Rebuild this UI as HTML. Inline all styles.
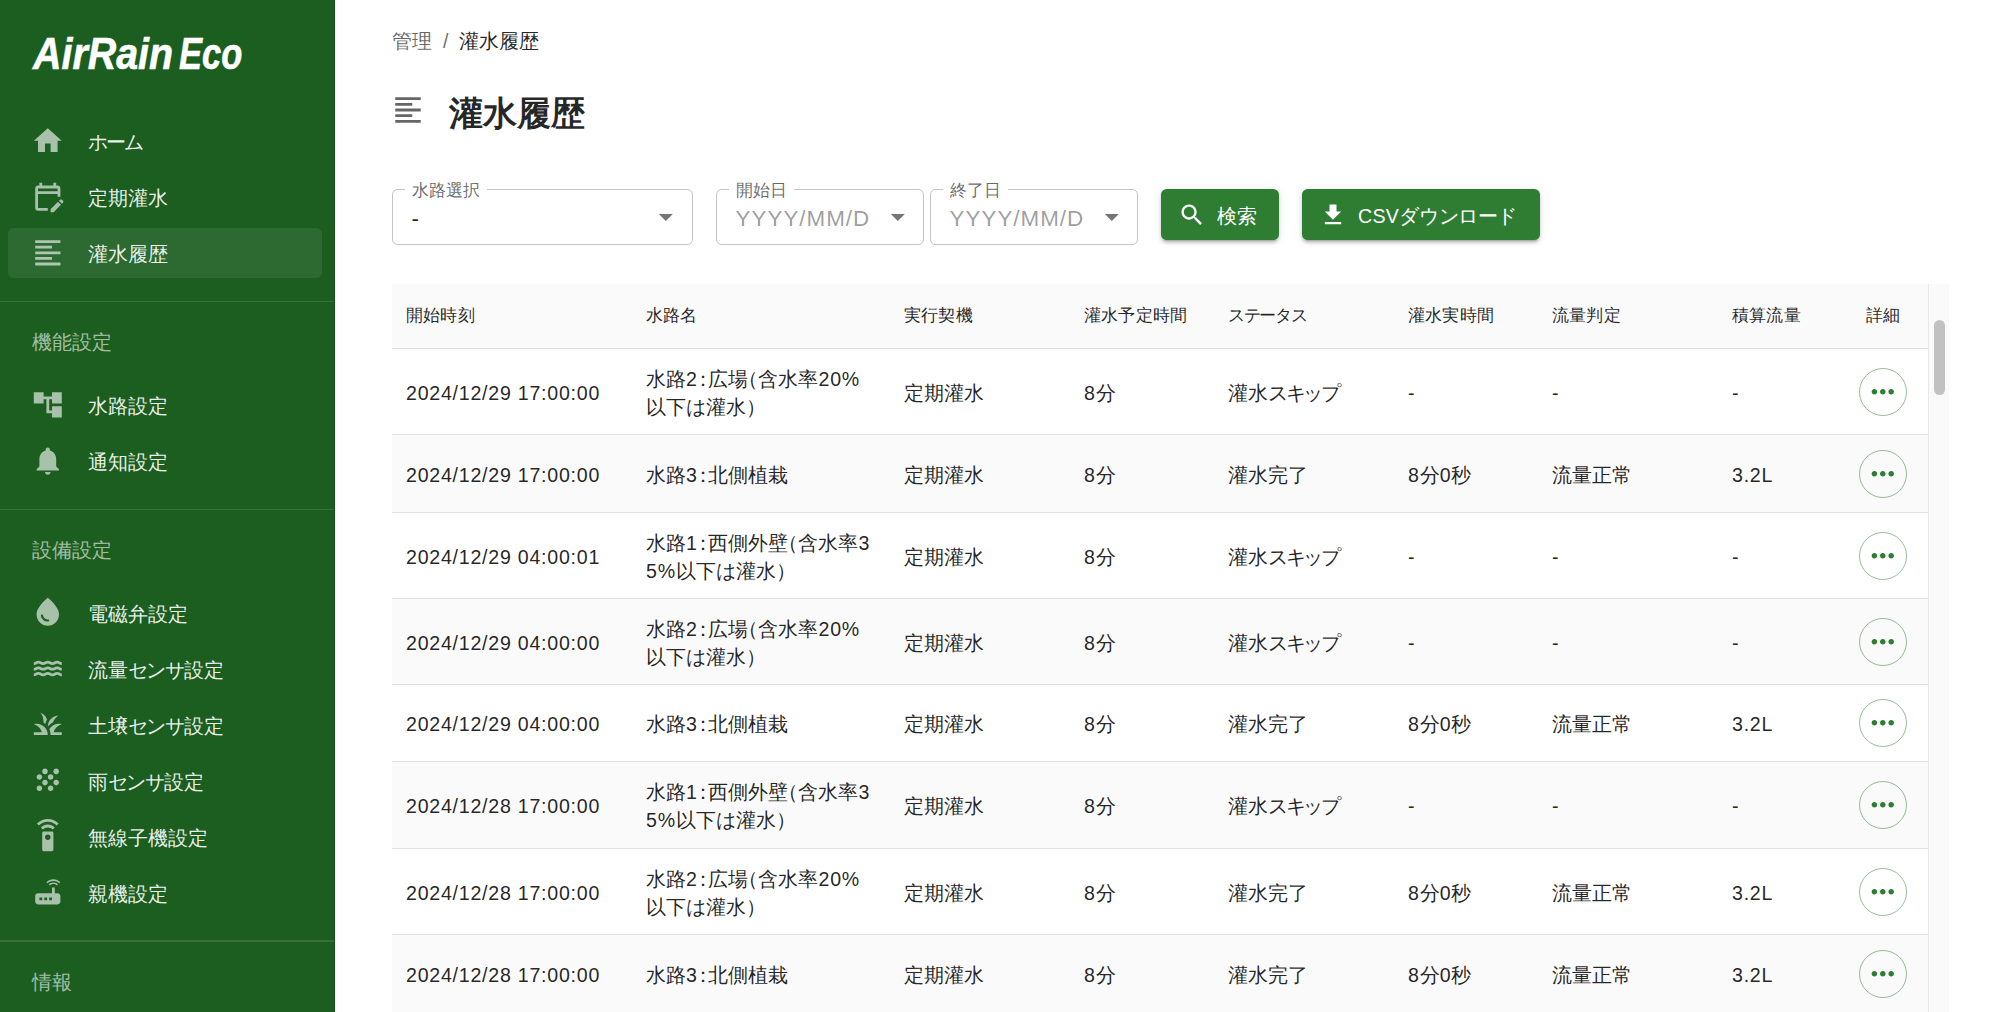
<!DOCTYPE html>
<html lang="ja">
<head>
<meta charset="utf-8">
<title>灌水履歴</title>
<style>
*{box-sizing:border-box;margin:0;padding:0}
html,body{width:2000px;height:1012px;overflow:hidden;background:#fff}
body{font-family:"Liberation Sans",sans-serif;color:rgba(0,0,0,.87);position:relative;font-size:19.6px}
.abs{position:absolute}
/* sidebar */
#side{position:absolute;left:0;top:0;width:335.4px;height:1012px;background:#1b5e20;border-right:1.4px solid rgba(0,0,0,.18);overflow:hidden}
#logo{position:absolute;left:0;top:0;font-weight:700;font-style:italic;font-size:45px;line-height:50px;color:#fff;white-space:nowrap}
#logo span{position:absolute;top:29px;transform-origin:0 0;-webkit-text-stroke:.6px #fff}
.nav{position:absolute;left:8px;width:313.5px;height:50.4px;border-radius:5.6px;color:rgba(255,255,255,.92);font-size:19.6px;line-height:52px;padding-left:79.6px;white-space:nowrap}
.nav.sel{background:rgba(255,255,255,.08)}
.nav svg{position:absolute;left:22.5px;top:7.9px;width:33.6px;height:33.6px;fill:rgba(255,255,255,.62)}
.sec{position:absolute;left:32px;color:rgba(255,255,255,.6);font-size:19.6px;line-height:28px;white-space:nowrap}
.div{position:absolute;left:0;width:336px;height:1.4px;background:rgba(255,255,255,.12)}
/* main */
#crumb{position:absolute;left:392px;top:27px;font-size:19.6px;line-height:28px;white-space:nowrap;color:rgba(0,0,0,.87)}
#crumb .g{color:rgba(0,0,0,.6)}
#crumb .s{color:rgba(0,0,0,.6);margin:0 11px}
#title{position:absolute;left:448.5px;top:90.8px;font-size:33.6px;font-weight:700;line-height:46px;white-space:nowrap;color:rgba(0,0,0,.87)}
#ticon{position:absolute;left:391px;top:93px;width:34px;height:34px;fill:rgba(0,0,0,.6)}
.fld{position:absolute;top:189.2px;height:56px;border:1.4px solid rgba(0,0,0,.23);border-radius:5.6px}
.fld .lb{position:absolute;left:12px;top:-11.5px;background:#fff;padding:0 7px;font-size:16.8px;line-height:24px;color:rgba(0,0,0,.6);white-space:nowrap}
.fld .val{position:absolute;left:18.6px;top:15px;font-size:22.4px;line-height:28px;white-space:nowrap}
.fld .ph{letter-spacing:1px}
.fld .ph{color:rgba(0,0,0,.4)}
.fld svg{position:absolute;top:10px;width:33.6px;height:33.6px;fill:rgba(0,0,0,.54)}
.btn{position:absolute;top:189px;height:51px;border-radius:5.6px;background:#2e7d32;color:#fff;font-size:19.6px;line-height:51px;white-space:nowrap;box-shadow:0 4px 2px -3px rgba(0,0,0,.2),0 3px 3px 0 rgba(0,0,0,.14),0 1.4px 7px 0 rgba(0,0,0,.12);}
.btn .t{position:absolute;left:56px;top:1.7px}
.btn svg{position:absolute;top:11.5px;width:28px;height:28px;fill:#fff}
/* table */
#tbl{position:absolute;left:392px;top:284px;width:1536px;height:728px;overflow:hidden}
.hd{position:absolute;left:0;top:0;width:1536px;height:65px;background:#fafafa;border-bottom:1.4px solid #e0e0e0;font-size:16.8px}
.hd>span{position:absolute;top:20.2px;line-height:24px;white-space:nowrap;color:rgba(0,0,0,.87);letter-spacing:.2px}
.row{position:absolute;left:0;width:1536px;border-bottom:1.4px solid #e0e0e0;font-size:19.6px}
.row.z{background:#fafafa}
.row>span{position:absolute;line-height:28px;white-space:nowrap}
.l{letter-spacing:.75px}
.pc{margin:0 -4.9px}.po{margin-left:-9.4px}.pe{margin-right:-9.4px}
.k{letter-spacing:-2.5px}
.hd .k{letter-spacing:-1.3px}
.btn .k{letter-spacing:-.35px}
.btn .l{letter-spacing:.3px}
.more{position:absolute;left:1467px;width:48px;height:48px;border-radius:50%;border:1.4px solid rgba(46,125,50,.5)}
.more svg{position:absolute;left:5.8px;top:5.8px;width:33.6px;height:33.6px;fill:#2e7d32}
#sb{position:absolute;left:1928px;top:284px;width:20.5px;height:728px;background:#fafafa;border-left:1.4px solid #e8e8e8}
#sb i{position:absolute;left:4.5px;top:36px;width:11.5px;height:75px;border-radius:6px;background:#c1c1c1}
</style>
</head>
<body>
<div id="side">
<div id="logo"><span style="left:33px;transform:scaleX(.875)">AirRain</span> <span style="left:178.5px;transform:scaleX(.766)">Eco</span></div>
<div class="nav" style="top:115.8px"><svg viewBox="0 0 24 24"><path d="M10 20v-6h4v6h5v-8h3L12 3 2 12h3v8z"/></svg><span class="k" style="letter-spacing:-1.8px">ホーム</span></div>
<div class="nav" style="top:171.8px"><svg viewBox="0 0 24 24"><path d="M5 10h14v2h2V6c0-1.1-.9-2-2-2h-1V2h-2v2H8V2H6v2H5c-1.11 0-1.99.9-1.99 2L3 20c0 1.1.89 2 2 2h7v-2H5V10zm0-4h14v2H5V6zm17.84 10.28-.71.71-2.12-2.12.71-.71c.39-.39 1.02-.39 1.41 0l.71.71c.39.39.39 1.02 0 1.41zm-3.54-.7 2.12 2.12-5.3 5.3H14v-2.12l5.3-5.3z"/></svg>定期灌水</div>
<div class="nav sel" style="top:227.8px"><svg viewBox="0 0 24 24"><path d="M15 15H3v2h12v-2zm0-8H3v2h12V7zM3 13h18v-2H3v2zm0 8h18v-2H3v2zM3 3v2h18V3H3z"/></svg>灌水履歴</div>
<div class="div" style="top:300.8px"></div>
<div class="sec" style="top:328.0px">機能設定</div>
<div class="nav" style="top:379.8px"><svg viewBox="0 0 24 24"><path d="M22 11V3h-7v3H9V3H2v8h7V8h2v10h4v3h7v-8h-7v3h-2V8h2v3z"/></svg>水路設定</div>
<div class="nav" style="top:435.8px"><svg viewBox="0 0 24 24"><path d="M12 22c1.1 0 2-.9 2-2h-4c0 1.1.89 2 2 2zm6-6v-5c0-3.07-1.64-5.64-4.5-6.32V4c0-.83-.67-1.5-1.5-1.5s-1.5.67-1.5 1.5v.68C7.63 5.36 6 7.92 6 11v5l-2 2v1h16v-1l-2-2z"/></svg>通知設定</div>
<div class="div" style="top:508.6px"></div>
<div class="sec" style="top:535.8px">設備設定</div>
<div class="nav" style="top:587.6px"><svg viewBox="0 0 24 24"><path d="M12 2c-5.33 4.55-8 8.48-8 11.8 0 4.98 3.8 8.2 8 8.2s8-3.22 8-8.2c0-3.32-2.67-7.25-8-11.8zM7.83 14c.37 0 .67.26.74.62.41 2.22 2.28 2.98 3.64 2.87.43-.02.79.32.79.75 0 .4-.32.73-.72.75-2.13.13-4.62-1.09-5.19-4.12-.08-.45.28-.87.74-.87z"/></svg>電磁弁設定</div>
<div class="nav" style="top:643.6px"><svg viewBox="0 0 24 24"><path d="M5.35 13c1.19 0 1.42 1 3.33 1 1.95 0 2.09-1 3.33-1 1.19 0 1.42 1 3.33 1 1.95 0 2.09-1 3.33-1 1.19 0 1.4.98 3.31 1v-2c-1.19 0-1.42-1-3.33-1-1.95 0-2.09 1-3.33 1-1.19 0-1.42-1-3.33-1-1.95 0-2.09 1-3.33 1-1.19 0-1.42-1-3.33-1-1.95 0-2.09 1-3.33 1v2c1.9 0 2.17-1 3.35-1zm13.32 2c-1.95 0-2.09 1-3.33 1-1.19 0-1.42-1-3.33-1-1.95 0-2.1 1-3.34 1-1.24 0-1.38-1-3.33-1-1.95 0-2.1 1-3.34 1v2c1.95 0 2.11-1 3.34-1 1.24 0 1.38 1 3.33 1 1.95 0 2.1-1 3.34-1 1.19 0 1.42 1 3.33 1 1.94 0 2.09-1 3.33-1 1.19 0 1.42 1 3.33 1v-2c-1.24 0-1.38-1-3.33-1zM5.35 9c1.19 0 1.42 1 3.33 1 1.95 0 2.09-1 3.33-1 1.19 0 1.42 1 3.33 1 1.95 0 2.09-1 3.33-1 1.19 0 1.4.98 3.31 1V8c-1.19 0-1.42-1-3.33-1-1.95 0-2.09 1-3.33 1-1.19 0-1.42-1-3.33-1-1.95 0-2.09 1-3.33 1-1.19 0-1.42-1-3.33-1C3.38 7 3.24 8 2 8v2c1.9 0 2.17-1 3.35-1z"/></svg>流量<span class="k" style="letter-spacing:-1.2px">センサ</span>設定</div>
<div class="nav" style="top:699.6px"><svg viewBox="0 0 24 24"><path d="M12 20H2v-2h5.750C7.020 15.190 4.810 12.990 2 12.260 2.640 12.100 3.310 12 4 12c4.420 0 8 3.580 8 8zM22 12.260c-.640-.160-1.310-.260-2-.260-2.930 0-5.480 1.580-6.880 3.930.290.660.530 1.350.670 2.070.130.650.200 1.320.200 2h8v-2h-5.750c.740-2.810 2.950-5.010 5.760-5.740zM15.640 11.020c.780-2.090 2.230-3.840 4.090-5C15.440 6.160 12 9.670 12 14v.020c.950-1.270 2.200-2.300 3.640-3zM11.420 8.850C10.580 6.660 8.880 4.890 6.700 4 8.140 5.860 9 8.180 9 10.710c0 .210-.030.410-.040.610.430.240.830.520 1.220.820.210-1.180.650-2.290 1.240-3.290z"/></svg>土壌<span class="k" style="letter-spacing:-1.2px">センサ</span>設定</div>
<div class="nav" style="top:755.6px"><svg viewBox="0 0 24 24"><path d="M10 12c-1.1 0-2 .9-2 2s.9 2 2 2 2-.9 2-2-.9-2-2-2zM6 8c-1.1 0-2 .9-2 2s.9 2 2 2 2-.9 2-2-.9-2-2-2zm0 8c-1.1 0-2 .9-2 2s.9 2 2 2 2-.9 2-2-.9-2-2-2zm12-8c1.1 0 2-.9 2-2s-.9-2-2-2-2 .9-2 2 .9 2 2 2zm-4 8c-1.1 0-2 .9-2 2s.9 2 2 2 2-.9 2-2-.9-2-2-2zm4-4c-1.1 0-2 .9-2 2s.9 2 2 2 2-.9 2-2-.9-2-2-2zm-4-4c-1.1 0-2 .9-2 2s.9 2 2 2 2-.9 2-2-.9-2-2-2zm-4-4c-1.1 0-2 .9-2 2s.9 2 2 2 2-.9 2-2-.9-2-2-2z"/></svg>雨<span class="k" style="letter-spacing:-1.2px">センサ</span>設定</div>
<div class="nav" style="top:811.6px"><svg viewBox="0 0 24 24"><path d="M15 9H9c-.55 0-1 .45-1 1v12c0 .55.45 1 1 1h6c.55 0 1-.45 1-1V10c0-.55-.45-1-1-1zm-3 6c-1.1 0-2-.9-2-2s.9-2 2-2 2 .9 2 2-.9 2-2 2zM7.05 6.050l1.410 1.410C9.370 6.560 10.620 6 12 6s2.630.56 3.540 1.460l1.410-1.410C15.680 4.780 13.930 4 12 4s-3.680.78-4.950 2.050zM12 0C8.960 0 6.210 1.230 4.220 3.220l1.410 1.410C7.260 3.010 9.510 2 12 2s4.740 1.010 6.360 2.640l1.410-1.410C17.790 1.230 15.040 0 12 0z"/></svg>無線子機設定</div>
<div class="nav" style="top:867.6px"><svg viewBox="0 0 24 24"><path d="M20.200 5.900l.8-.8C19.600 3.700 17.800 3 16 3s-3.600.7-5 2.100l.8.8C13 4.800 14.500 4.200 16 4.200s3 .6 4.200 1.700zm-.9.8c-.9-.9-2.100-1.400-3.300-1.400s-2.400.5-3.300 1.400l.8.8c.7-.7 1.600-1 2.500-1 .9 0 1.800.3 2.500 1l.8-.8zM19 13h-2V9h-2v4H5c-1.100 0-2 .9-2 2v4c0 1.100.9 2 2 2h14c1.100 0 2-.9 2-2v-4c0-1.100-.9-2-2-2zM8 18H6v-2h2v2zm3.500 0h-2v-2h2v2zm3.500 0h-2v-2h2v2z"/></svg>親機設定</div>
<div class="div" style="top:940.4px"></div>
<div class="sec" style="top:967.6px">情報</div>
</div>
<div id="main">
<div id="crumb"><span class="g">管理</span><span class="s">/</span><span>灌水履歴</span></div>
<svg id="ticon" viewBox="0 0 24 24"><path d="M15 15H3v2h12v-2zm0-8H3v2h12V7zM3 13h18v-2H3v2zm0 8h18v-2H3v2zM3 3v2h18V3H3z"/></svg>
<div id="title">灌水履歴</div>
<div class="fld" style="left:392px;width:300.5px"><span class="lb">水路選択</span><span class="val">-</span><svg viewBox="0 0 24 24" style="left:256px"><path d="M7 10l5 5 5-5z"/></svg></div>
<div class="fld" style="left:716px;width:207.5px"><span class="lb">開始日</span><span class="val ph">YYYY/MM/D</span><svg viewBox="0 0 24 24" style="left:164px"><path d="M7 10l5 5 5-5z"/></svg></div>
<div class="fld" style="left:930px;width:207.5px"><span class="lb">終了日</span><span class="val ph">YYYY/MM/D</span><svg viewBox="0 0 24 24" style="left:164px"><path d="M7 10l5 5 5-5z"/></svg></div>
<div class="btn" style="left:1161px;width:118px"><svg viewBox="0 0 24 24" style="left:16.5px"><path d="M15.5 14h-.79l-.28-.27C15.41 12.59 16 11.11 16 9.5 16 5.91 13.09 3 9.5 3S3 5.91 3 9.5 5.91 16 9.5 16c1.61 0 3.09-.59 4.23-1.57l.27.28v.79l5 4.99L20.49 19l-4.99-5zm-6 0C7.01 14 5 11.99 5 9.5S7.01 5 9.5 5 14 7.01 14 9.5 11.990 14 9.5 14z"/></svg><span class="t">検索</span></div>
<div class="btn" style="left:1302px;width:238px"><svg viewBox="0 0 24 24" style="left:16.5px"><path d="M5 20h14v-2H5v2zM19 9h-4V3H9v6H5l7 7 7-7z"/></svg><span class="t"><span class="l">CSV</span><span class="k">ダウンロード</span></span></div>
<div id="tbl"><div class="hd"><span style="left:14px">開始時刻</span><span style="left:254px">水路名</span><span style="left:512px">実行契機</span><span style="left:692px">灌水予定時間</span><span style="left:836px"><span class="k">ステータス</span></span><span style="left:1016px">灌水実時間</span><span style="left:1160px">流量判定</span><span style="left:1340px">積算流量</span><span style="left:1474px">詳細</span></div>
<div class="row" style="top:65px;height:86px"><span style="left:14px;top:29.9px"><span class="l">2024/12/29 17:00:00</span></span><span style="left:254px;top:15.9px">水路<span class="l">2</span><span class="pc">：</span>広場<span class="po">（</span>含水率<span class="l">20%</span><br>以下は灌水<span class="pe">）</span></span><span style="left:512px;top:29.9px">定期灌水</span><span style="left:692px;top:29.9px"><span class="l">8</span>分</span><span style="left:836px;top:29.9px">灌水<span class="k">スキップ</span></span><span style="left:1016px;top:29.9px"><span class="l">-</span></span><span style="left:1160px;top:29.9px"><span class="l">-</span></span><span style="left:1340px;top:29.9px"><span class="l">-</span></span><div class="more" style="top:18.9px"><svg viewBox="0 0 24 24"><path d="M6 10c-1.1 0-2 .9-2 2s.9 2 2 2 2-.9 2-2-.9-2-2-2zm12 0c-1.1 0-2 .9-2 2s.9 2 2 2 2-.9 2-2-.9-2-2-2zm-6 0c-1.1 0-2 .9-2 2s.9 2 2 2 2-.9 2-2-.9-2-2-2z"/></svg></div></div>
<div class="row z" style="top:151px;height:78px"><span style="left:14px;top:25.9px"><span class="l">2024/12/29 17:00:00</span></span><span style="left:254px;top:25.9px">水路<span class="l">3</span><span class="pc">：</span>北側植栽</span><span style="left:512px;top:25.9px">定期灌水</span><span style="left:692px;top:25.9px"><span class="l">8</span>分</span><span style="left:836px;top:25.9px">灌水完了</span><span style="left:1016px;top:25.9px"><span class="l">8</span>分<span class="l">0</span>秒</span><span style="left:1160px;top:25.9px">流量正常</span><span style="left:1340px;top:25.9px"><span class="l">3.2L</span></span><div class="more" style="top:14.9px"><svg viewBox="0 0 24 24"><path d="M6 10c-1.1 0-2 .9-2 2s.9 2 2 2 2-.9 2-2-.9-2-2-2zm12 0c-1.1 0-2 .9-2 2s.9 2 2 2 2-.9 2-2-.9-2-2-2zm-6 0c-1.1 0-2 .9-2 2s.9 2 2 2 2-.9 2-2-.9-2-2-2z"/></svg></div></div>
<div class="row" style="top:229px;height:86px"><span style="left:14px;top:29.9px"><span class="l">2024/12/29 04:00:01</span></span><span style="left:254px;top:15.9px">水路<span class="l">1</span><span class="pc">：</span>西側外壁<span class="po">（</span>含水率<span class="l">3</span><br><span class="l">5%</span>以下は灌水<span class="pe">）</span></span><span style="left:512px;top:29.9px">定期灌水</span><span style="left:692px;top:29.9px"><span class="l">8</span>分</span><span style="left:836px;top:29.9px">灌水<span class="k">スキップ</span></span><span style="left:1016px;top:29.9px"><span class="l">-</span></span><span style="left:1160px;top:29.9px"><span class="l">-</span></span><span style="left:1340px;top:29.9px"><span class="l">-</span></span><div class="more" style="top:18.9px"><svg viewBox="0 0 24 24"><path d="M6 10c-1.1 0-2 .9-2 2s.9 2 2 2 2-.9 2-2-.9-2-2-2zm12 0c-1.1 0-2 .9-2 2s.9 2 2 2 2-.9 2-2-.9-2-2-2zm-6 0c-1.1 0-2 .9-2 2s.9 2 2 2 2-.9 2-2-.9-2-2-2z"/></svg></div></div>
<div class="row z" style="top:315px;height:86px"><span style="left:14px;top:29.9px"><span class="l">2024/12/29 04:00:00</span></span><span style="left:254px;top:15.9px">水路<span class="l">2</span><span class="pc">：</span>広場<span class="po">（</span>含水率<span class="l">20%</span><br>以下は灌水<span class="pe">）</span></span><span style="left:512px;top:29.9px">定期灌水</span><span style="left:692px;top:29.9px"><span class="l">8</span>分</span><span style="left:836px;top:29.9px">灌水<span class="k">スキップ</span></span><span style="left:1016px;top:29.9px"><span class="l">-</span></span><span style="left:1160px;top:29.9px"><span class="l">-</span></span><span style="left:1340px;top:29.9px"><span class="l">-</span></span><div class="more" style="top:18.9px"><svg viewBox="0 0 24 24"><path d="M6 10c-1.1 0-2 .9-2 2s.9 2 2 2 2-.9 2-2-.9-2-2-2zm12 0c-1.1 0-2 .9-2 2s.9 2 2 2 2-.9 2-2-.9-2-2-2zm-6 0c-1.1 0-2 .9-2 2s.9 2 2 2 2-.9 2-2-.9-2-2-2z"/></svg></div></div>
<div class="row" style="top:401px;height:77px"><span style="left:14px;top:25.4px"><span class="l">2024/12/29 04:00:00</span></span><span style="left:254px;top:25.4px">水路<span class="l">3</span><span class="pc">：</span>北側植栽</span><span style="left:512px;top:25.4px">定期灌水</span><span style="left:692px;top:25.4px"><span class="l">8</span>分</span><span style="left:836px;top:25.4px">灌水完了</span><span style="left:1016px;top:25.4px"><span class="l">8</span>分<span class="l">0</span>秒</span><span style="left:1160px;top:25.4px">流量正常</span><span style="left:1340px;top:25.4px"><span class="l">3.2L</span></span><div class="more" style="top:14.4px"><svg viewBox="0 0 24 24"><path d="M6 10c-1.1 0-2 .9-2 2s.9 2 2 2 2-.9 2-2-.9-2-2-2zm12 0c-1.1 0-2 .9-2 2s.9 2 2 2 2-.9 2-2-.9-2-2-2zm-6 0c-1.1 0-2 .9-2 2s.9 2 2 2 2-.9 2-2-.9-2-2-2z"/></svg></div></div>
<div class="row z" style="top:478px;height:87px"><span style="left:14px;top:30.4px"><span class="l">2024/12/28 17:00:00</span></span><span style="left:254px;top:16.4px">水路<span class="l">1</span><span class="pc">：</span>西側外壁<span class="po">（</span>含水率<span class="l">3</span><br><span class="l">5%</span>以下は灌水<span class="pe">）</span></span><span style="left:512px;top:30.4px">定期灌水</span><span style="left:692px;top:30.4px"><span class="l">8</span>分</span><span style="left:836px;top:30.4px">灌水<span class="k">スキップ</span></span><span style="left:1016px;top:30.4px"><span class="l">-</span></span><span style="left:1160px;top:30.4px"><span class="l">-</span></span><span style="left:1340px;top:30.4px"><span class="l">-</span></span><div class="more" style="top:19.4px"><svg viewBox="0 0 24 24"><path d="M6 10c-1.1 0-2 .9-2 2s.9 2 2 2 2-.9 2-2-.9-2-2-2zm12 0c-1.1 0-2 .9-2 2s.9 2 2 2 2-.9 2-2-.9-2-2-2zm-6 0c-1.1 0-2 .9-2 2s.9 2 2 2 2-.9 2-2-.9-2-2-2z"/></svg></div></div>
<div class="row" style="top:565px;height:86px"><span style="left:14px;top:29.9px"><span class="l">2024/12/28 17:00:00</span></span><span style="left:254px;top:15.9px">水路<span class="l">2</span><span class="pc">：</span>広場<span class="po">（</span>含水率<span class="l">20%</span><br>以下は灌水<span class="pe">）</span></span><span style="left:512px;top:29.9px">定期灌水</span><span style="left:692px;top:29.9px"><span class="l">8</span>分</span><span style="left:836px;top:29.9px">灌水完了</span><span style="left:1016px;top:29.9px"><span class="l">8</span>分<span class="l">0</span>秒</span><span style="left:1160px;top:29.9px">流量正常</span><span style="left:1340px;top:29.9px"><span class="l">3.2L</span></span><div class="more" style="top:18.9px"><svg viewBox="0 0 24 24"><path d="M6 10c-1.1 0-2 .9-2 2s.9 2 2 2 2-.9 2-2-.9-2-2-2zm12 0c-1.1 0-2 .9-2 2s.9 2 2 2 2-.9 2-2-.9-2-2-2zm-6 0c-1.1 0-2 .9-2 2s.9 2 2 2 2-.9 2-2-.9-2-2-2z"/></svg></div></div>
<div class="row z" style="top:651px;height:78px"><span style="left:14px;top:25.9px"><span class="l">2024/12/28 17:00:00</span></span><span style="left:254px;top:25.9px">水路<span class="l">3</span><span class="pc">：</span>北側植栽</span><span style="left:512px;top:25.9px">定期灌水</span><span style="left:692px;top:25.9px"><span class="l">8</span>分</span><span style="left:836px;top:25.9px">灌水完了</span><span style="left:1016px;top:25.9px"><span class="l">8</span>分<span class="l">0</span>秒</span><span style="left:1160px;top:25.9px">流量正常</span><span style="left:1340px;top:25.9px"><span class="l">3.2L</span></span><div class="more" style="top:14.9px"><svg viewBox="0 0 24 24"><path d="M6 10c-1.1 0-2 .9-2 2s.9 2 2 2 2-.9 2-2-.9-2-2-2zm12 0c-1.1 0-2 .9-2 2s.9 2 2 2 2-.9 2-2-.9-2-2-2zm-6 0c-1.1 0-2 .9-2 2s.9 2 2 2 2-.9 2-2-.9-2-2-2z"/></svg></div></div></div>
<div id="sb"><i></i></div>
</div>
</body>
</html>
